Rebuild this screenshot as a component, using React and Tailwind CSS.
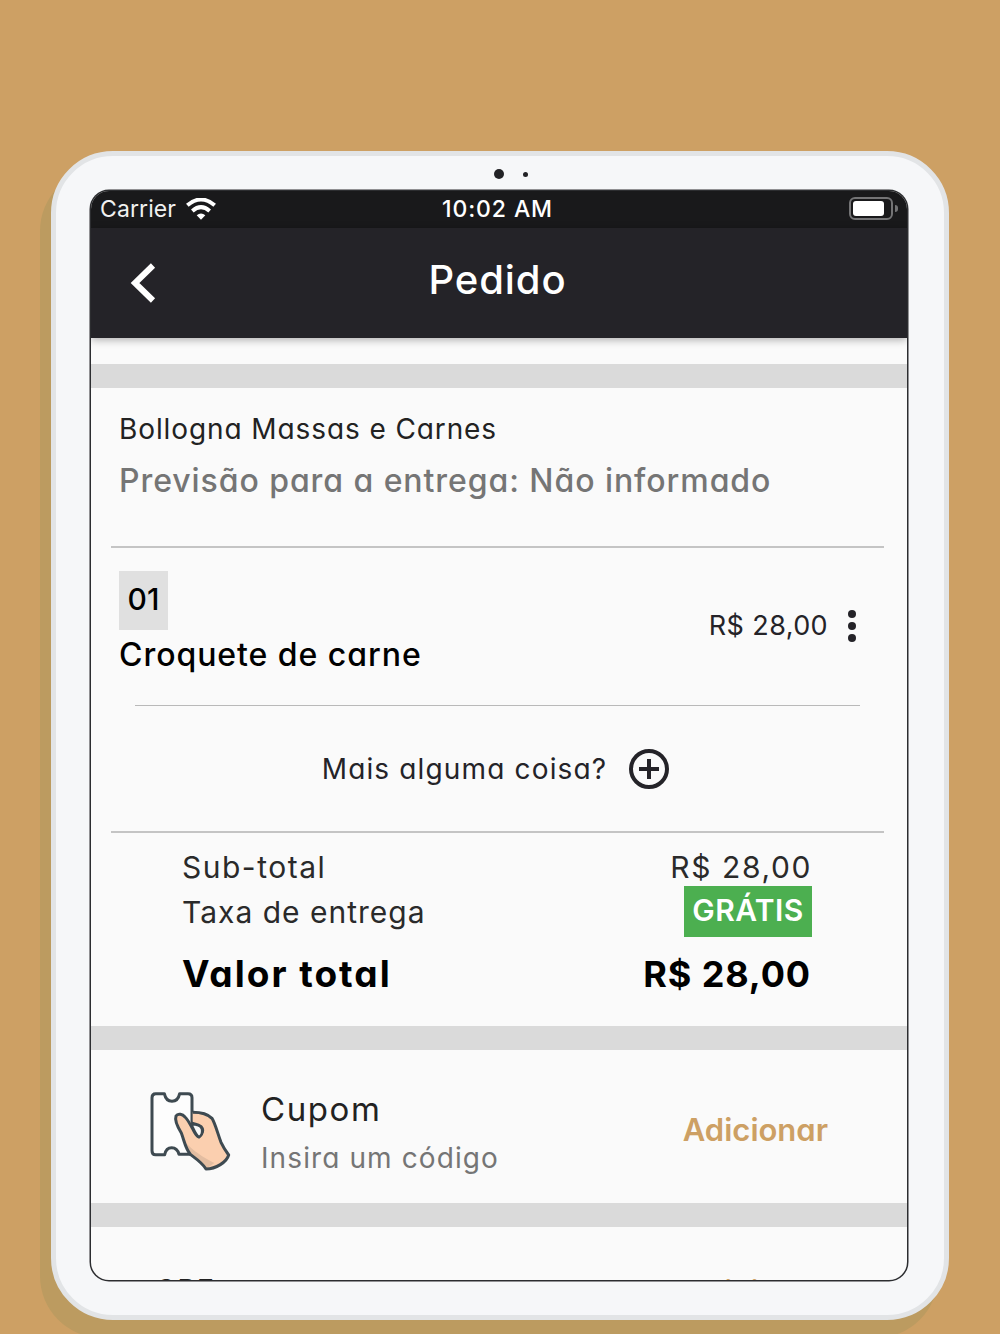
const poppins = 'font-[Inter,sans-serif] [font-feature-settings:"cv11"]';

// Thick grey band between the sections
function Band() {
  return <div className="h-6 shrink-0 bg-[#dadada]" />;
}

function StatusBar() {
  return (
    <div className="grid h-[37px] shrink-0 grid-cols-3 items-center bg-[#19191b] font-[Inter,sans-serif] text-white [font-feature-settings:normal]">
      <div className="flex items-center pl-[9px]">
        <span className="text-[23px] tracking-[0.1px] text-[#f1f1f1]">Carrier</span>
        <svg className="ml-[10px] h-[23px] w-[30px]" viewBox="0 0 90 69" fill="none" stroke="white">
          <path d="M4 22 Q45 -13 86 22" strokeWidth="12" />
          <path d="M19 39 Q45 16 71 39" strokeWidth="12" />
          <path d="M32 52 Q45 41 58 52 L45 65Z" fill="white" stroke="none" />
        </svg>
      </div>
      <span className="pr-[3px] text-center text-[23px] font-medium tracking-[0.9px]">10:02 AM</span>
      <div className="flex items-center justify-end pr-[9px] pb-[2px]">
        <div className="h-[23px] w-[44px] rounded-[6px] border-2 border-[#747476] p-[2px]">
          <div className="h-[15px] w-[31px] rounded-[3px] bg-white" />
        </div>
        <div className="ml-[2px] h-[7px] w-[3px] rounded-r-full bg-[#747476]" />
      </div>
    </div>
  );
}

function Header() {
  return (
    <div className="z-10 flex h-[110px] shrink-0 items-center bg-[#242328] text-white shadow-[0_2px_8px_rgba(0,0,0,0.3)]">
      <div className="flex w-[270px] pl-[39px]">
        <svg className="h-[40px] w-[26px]" viewBox="0 0 26 40" fill="none" stroke="white" strokeWidth="6">
          <path d="M23 2.5 L5 20 L23 37.5" />
        </svg>
      </div>
      <h1 className="flex-1 pb-[6px] text-center text-[40px] font-medium tracking-[0.9px]">Pedido</h1>
      <div className="w-[273px]" />
    </div>
  );
}

function Restaurant() {
  return (
    <section className="h-[158px] shrink-0 pt-[21px] pl-[28px]">
      <p className="h-[40px] text-[28px] leading-[40px] tracking-[0.9px] whitespace-nowrap text-[#222]">
        Bollogna Massas e Carnes
      </p>
      <p className="mt-[10px] h-[44px] text-[32px] leading-[44px] font-medium tracking-[0.93px] whitespace-nowrap text-[#757575]">
        Previsão para a entrega: Não informado
      </p>
    </section>
  );
}

function Item() {
  return (
    <section className="mr-[23px] ml-[20px] flex h-[159px] shrink-0 justify-between border-t-2 border-[#c4c4c4] pr-[28px] pl-[8px]">
      <div className="pt-[23px]">
        <div className="flex h-[59px] w-[49px] justify-center bg-[#e0e0e0] text-[30px] leading-[56px] font-medium">01</div>
        <p className="mt-[3px] text-[32px] leading-[44px] font-medium tracking-[0.95px] whitespace-nowrap">
          Croquete de carne
        </p>
      </div>
      <div className="flex h-[156px] items-center">
        <span className="text-[27px] tracking-[0.4px] whitespace-nowrap text-[#242328]">R$ 28,00</span>
        <svg className="ml-[20px] h-[32px] w-[8px]" viewBox="0 0 8 32" fill="#242328">
          <circle cx="4" cy="4" r="4" />
          <circle cx="4" cy="16" r="4" />
          <circle cx="4" cy="28" r="4" />
        </svg>
      </div>
    </section>
  );
}

function AddMore() {
  return (
    <div className="mr-[47px] ml-[44px] h-[126px] shrink-0 border-t border-[#b9b9b9]">
      <div className="flex h-[126px] items-center justify-center pr-[4px]">
        <span className="text-[28px] tracking-[1.15px] whitespace-nowrap text-[#242328]">Mais alguma coisa?</span>
        <svg className="ml-[22px] h-[40px] w-[40px]" viewBox="0 0 40 40" fill="none" stroke="#242328" strokeWidth="4">
          <circle cx="20" cy="20" r="18" />
          <path d="M20 10 V30 M10 20 H30" />
        </svg>
      </div>
    </div>
  );
}

function Totals() {
  return (
    <section className="mr-[23px] ml-[20px] h-[195px] shrink-0 border-t-2 border-[#c4c4c4] pr-[72px] pl-[71px] whitespace-nowrap">
      <div className="flex h-[53px] items-end justify-between text-[30px] leading-[37px] text-[#2a2a2a] [font-feature-settings:normal]">
        <span className="tracking-[1.5px]">Sub-total</span>
        <span className="tracking-[1.6px]">R$ 28,00</span>
      </div>
      <div className="flex h-[51px] justify-between">
        <span className="text-[30px] leading-[52px] tracking-[1px] text-[#2a2a2a] [font-feature-settings:normal]">
          Taxa de entrega
        </span>
        <span className="flex h-[51px] w-[128px] justify-center bg-[#4caf50] text-[30px] leading-[49px] font-semibold tracking-[0.4px] text-white">
          GRÁTIS
        </span>
      </div>
      <div className="flex h-[74px] justify-between pr-px text-[37px] leading-[74px] font-bold">
        <span className="tracking-[2px]">Valor total</span>
        <span className="text-[36px] tracking-[0.9px]">R$ 28,00</span>
      </div>
    </section>
  );
}

function CouponIcon() {
  return (
    <svg className="mt-[30px] h-[110px] w-[120px]" viewBox="0 0 360 330" stroke="#3e4a51" strokeWidth="9" strokeLinejoin="round">
      <path
        d="M77 41 H103 Q108 64 126 64 Q144 64 149 41 H174 Q186 41 186 53 V223 H147 Q142 203 125 203 Q108 203 104 224 H77 Q66 224 66 212 V53 Q66 41 77 41Z"
        fill="#fdfdfd"
      />
      <path
        d="M188 97 C208 97 233 102 246 115 C256 132 262 157 273 187 C280 202 288 214 296 225 C290 246 258 267 228 267 C217 249 198 236 182 224 C166 207 164 186 154 159 C143 141 134 119 138 108 C144 98 158 103 165 111 L188 132Z"
        fill="#fbcfaf"
        stroke="none"
      />
      <path d="M166 187 C188 212 222 234 253 249 L228 267 C217 249 198 236 182 224Z" fill="#e3bda1" stroke="none" />
      <path
        d="M188 97 C208 97 233 102 246 115 C256 132 262 157 273 187 C280 202 288 214 296 225 C290 246 258 267 228 267 C217 249 198 236 182 224 C166 207 164 186 154 159 C143 141 134 119 138 108 C144 98 158 103 165 111 C175 120 181 135 190 150 C196 162 200 169 207 171 C218 163 222 149 213 140 C206 133 195 132 184 129"
        fill="none"
      />
      <path d="M184 133 C198 133 213 137 216 148 C217 159 213 168 207 171 C198 166 193 151 184 133Z" fill="#fafafa" strokeWidth="7" />
    </svg>
  );
}

function Coupon() {
  return (
    <section className="flex h-[153px] shrink-0 pr-[79px] pl-[39px] whitespace-nowrap">
      <CouponIcon />
      <div className="flex-1 pt-[35px] pl-[11px]">
        <p className="text-[33px] leading-[49px] tracking-[1.6px] text-[#222]">Cupom</p>
        <p className="text-[28px] leading-[48px] tracking-[1.1px] text-[#757575]">Insira um código</p>
      </div>
      <span className="pt-[60px] text-[31px] leading-[40px] font-semibold text-[#cda064]">Adicionar</span>
    </section>
  );
}

function Invoice() {
  return (
    <section className="flex shrink-0 justify-between pt-[44px] pr-[79px] pl-[64px] whitespace-nowrap">
      <span className="text-[29px] leading-[38px] tracking-[1px] text-[#222]">CPF na nota</span>
      <span className="text-[31px] leading-[42px] font-semibold text-[#cda064]">Adicionar</span>
    </section>
  );
}

export default function App() {
  return (
    <div className={`flex h-[1334px] w-[1000px] justify-center overflow-hidden bg-[#cda064] pt-[151px] ${poppins}`}>
      <div className="flex h-[1169px] w-[898px] shrink-0 flex-col items-center rounded-[62px] border-[5px] border-[#e2e4e6] bg-[#f6f7f9] shadow-[-11px_18px_0_#bc9b60]">
        <div className="flex h-[35px] w-full shrink-0 items-center justify-center gap-[19px] pt-px pl-[21px]">
          <div className="size-[10px] rounded-full bg-[#222226]" />
          <div className="size-[5px] rounded-full bg-[#222226]" />
        </div>
        <div className="mr-[2px] flex h-[1089px] w-[816px] shrink-0 flex-col overflow-hidden rounded-[18px] bg-[#fafafa] text-black shadow-[0_0_0_1.5px_#2c2d30]">
          <StatusBar />
          <Header />
          <div className="h-[26px] shrink-0" />
          <Band />
          <Restaurant />
          <Item />
          <AddMore />
          <Totals />
          <Band />
          <Coupon />
          <Band />
          <Invoice />
        </div>
      </div>
    </div>
  );
}
